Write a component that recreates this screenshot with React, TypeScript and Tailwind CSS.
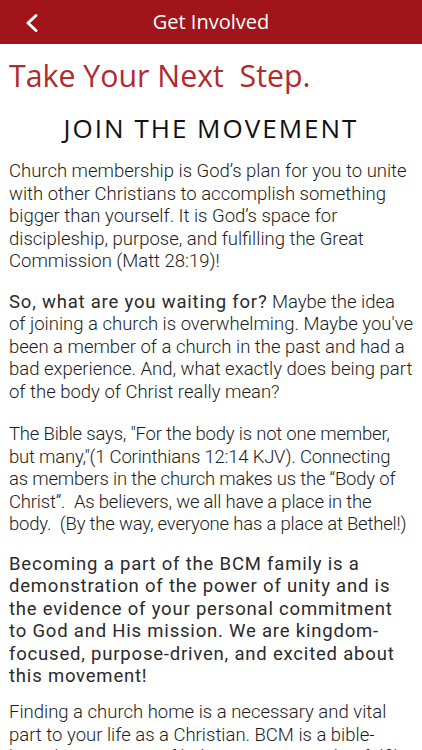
import React from "react";

export default function App() {
  const body = "font-['Roboto',sans-serif] font-light text-[18.5px] leading-[22.5px] text-[#1c1c1c]";
  return (
    <div className="w-[422px] h-[750px] overflow-hidden bg-white">
      <header className="h-[44px] bg-[#a11419] flex items-center justify-center relative">
        <svg className="absolute left-[24px] top-[13px]" width="16" height="20" viewBox="0 0 16 20" fill="none">
          <path d="M12 2.5 L4 10 L12 17.5" stroke="white" strokeWidth="3" strokeLinecap="round" strokeLinejoin="round" />
        </svg>
        <h1 className="font-['Open_Sans',sans-serif] text-[20px] text-white leading-none">Get Involved</h1>
      </header>
      <main className="px-[9px]">
        <h2 className="mt-[14px] font-['Open_Sans',sans-serif] text-[30.3px] leading-[36px] text-[#b02a2e] whitespace-pre">Take Your Next  Step.</h2>
        <h3 className="mt-[19px] text-center font-['Open_Sans',sans-serif] text-[26px] leading-[31px] tracking-[2px] text-[#111]">JOIN THE MOVEMENT</h3>
        <p className={`mt-[16px] ${body}`}>
          Church membership is God’s plan for you to unite with other Christians to accomplish something bigger than yourself. It is God’s space for discipleship, purpose, and fulfilling the Great Commission (Matt 28:19)!
        </p>
        <p className={`mt-[18px] ${body}`}>
          <span className="font-normal tracking-[0.8px] text-[#2a2a2a]">So, what are you waiting for?</span> Maybe the idea of joining a church is overwhelming. Maybe you've been a member of a church in the past and had a bad experience. And, what exactly does being part of the body of Christ really mean?
        </p>
        <p className={`mt-[20px] ${body} whitespace-pre-wrap tracking-[-0.2px]`}>
          {"The Bible says, \"For the body is not one member, but many,\"(1 Corinthians 12:14 KJV). Connecting as members in the church makes us the “Body of Christ”.  As believers, we all have a place in the body.  (By the way, everyone has a place at Bethel!)"}
        </p>
        <p className="mt-[17px] font-['Roboto',sans-serif] font-normal text-[18.5px] leading-[22.6px] tracking-[0.8px] text-[#2a2a2a]">
          Becoming a part of the BCM family is a demonstration of the power of unity and is the evidence of your personal commitment to God and His mission. We are kingdom-focused, purpose-driven, and excited about this movement!
        </p>
        <p className={`mt-[13px] ${body}`}>
          Finding a church home is a necessary and vital part to your life as a Christian. BCM is a bible-based community of believers motivated to fulfil the Great Commission.
        </p>
      </main>
    </div>
  );
}
